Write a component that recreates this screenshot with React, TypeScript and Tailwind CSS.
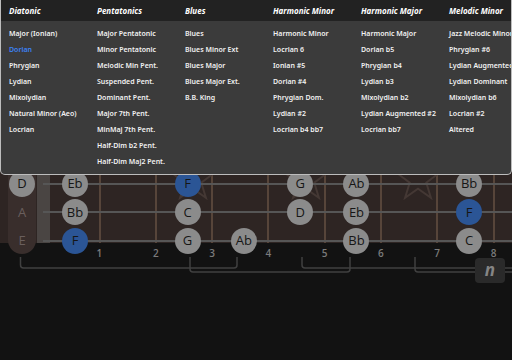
import React from 'react'

type Cell = { n: string; root?: boolean } | null

const SCALES = [
  { title: 'Diatonic', items: ['Major (Ionian)', 'Dorian', 'Phrygian', 'Lydian', 'Mixolydian', 'Natural Minor (Aeo)', 'Locrian'] },
  {
    title: 'Pentatonics',
    items: ['Major Pentatonic', 'Minor Pentatonic', 'Melodic Min Pent.', 'Suspended Pent.', 'Dominant Pent.', 'Major 7th Pent.', 'MinMaj 7th Pent.', 'Half-Dim b2 Pent.', 'Half-Dim Maj2 Pent.'],
  },
  { title: 'Blues', items: ['Blues', 'Blues Minor Ext', 'Blues Major', 'Blues Major Ext.', 'B.B. King'] },
  { title: 'Harmonic Minor', items: ['Harmonic Minor', 'Locrian 6', 'Ionian #5', 'Dorian #4', 'Phrygian Dom.', 'Lydian #2', 'Locrian b4 bb7'] },
  { title: 'Harmonic Major', items: ['Harmonic Major', 'Dorian b5', 'Phrygian b4', 'Lydian b3', 'Mixolydian b2', 'Lydian Augmented #2', 'Locrian bb7'] },
  { title: 'Melodic Minor', items: ['Jazz Melodic Minor', 'Phrygian #6', 'Lydian Augmented', 'Lydian Dominant', 'Mixolydian b6', 'Locrian #2', 'Altered'] },
]

// F dorian, frets 1..8 per string (G D A E)
const n = (x: string): Cell => ({ n: x })
const r = (x: string): Cell => ({ n: x, root: true })
const STRINGS: { open: string; on: boolean; frets: Cell[] }[] = [
  { open: 'G', on: true, frets: [n('Ab'), null, n('Bb'), null, n('C'), null, n('D'), n('Eb')] },
  { open: 'D', on: true, frets: [n('Eb'), null, r('F'), null, n('G'), n('Ab'), null, n('Bb')] },
  { open: 'A', on: false, frets: [n('Bb'), null, n('C'), null, n('D'), n('Eb'), null, r('F')] },
  { open: 'E', on: false, frets: [r('F'), null, n('G'), n('Ab'), null, n('Bb'), null, n('C')] },
]

const FRETS = [1, 2, 3, 4, 5, 6, 7, 8]

function Star() {
  return (
    <svg className="-mr-[5px] shrink-0" width="46" height="46" viewBox="-23 -23 46 46">
      <polygon
        points="0,-22 5.2,-7.1 20.9,-6.8 8.3,2.7 12.9,17.8 0,8.8 -12.9,17.8 -8.3,2.7 -20.9,-6.8 -5.2,-7.1"
        fill="none"
        stroke="#443834"
        strokeWidth="2"
      />
    </svg>
  )
}

function Dot({ cell }: { cell: { n: string; root?: boolean } }) {
  return (
    <div
      className={
        'w-[26px] h-[26px] shrink-0 rounded-full flex items-center justify-center text-[13px] text-[#161616] ' +
        (cell.root ? 'bg-[#2b5595]' : 'bg-[#8b8b8b]')
      }
    >
      {cell.n}
    </div>
  )
}

function Fretboard() {
  return (
    <div className="relative h-[243px] bg-[#2e2523]">
      {/* wood layer: open column, nut, fret wires, inlays */}
      <div className="absolute inset-0 flex items-start">
        <div className="w-[8px] shrink-0" />
        <div className="w-[28px] h-[254px] shrink-0 rounded-b-full bg-[#392e2c]" />
        <div className="w-[1px] shrink-0" />
        <div className="w-[13px] h-full shrink-0 bg-[#4a4543]" />
        <div className="w-[50.5px] h-full shrink-0 border-r-2 border-[#57453a]" />
        {[2, 3, 4, 5, 6, 7, 8, 9].map((f) => (
          <div key={f} className="w-[56.3px] h-full shrink-0 border-r-2 border-[#57453a] flex justify-end pt-[157px]">
            {(f === 3 || f === 5 || f === 7) && <Star />}
          </div>
        ))}
      </div>
      {/* strings with notes */}
      <div className="absolute inset-0 flex flex-col pt-[141px]">
        {STRINGS.map((s) => (
          <div key={s.open} className="relative h-[28.5px] shrink-0 flex items-center">
            <div className="absolute left-[43px] right-0 top-1/2 -translate-y-1/2 h-[2px] bg-[#565656]" />
            <div className="relative w-[43.2px] shrink-0 pl-[9px]">
              {s.on ? (
                <Dot cell={{ n: s.open }} />
              ) : (
                <div className="w-[26px] h-[26px] flex items-center justify-center text-[13px] text-[#6a5f5d]">{s.open}</div>
              )}
            </div>
            {s.frets.map((c, i) => (
              <div key={i} className="relative w-[56.3px] shrink-0 flex justify-end pr-[11.5px]">
                {c && <Dot cell={c} />}
              </div>
            ))}
          </div>
        ))}
      </div>
    </div>
  )
}

function ScaleMenu() {
  return (
    <div className="absolute left-0 top-0 w-[512px] h-[175px] overflow-hidden rounded-b-[5px] border border-t-0 border-[#bdbdbd] bg-[#3b3b3b] font-['Noto_Sans',sans-serif]">
      <div className="flex h-[21px] bg-[#222222]">
        {SCALES.map((c) => (
          <div key={c.title} className="w-[88px] shrink-0 pl-[8px] flex items-center text-[8px] font-bold italic text-white">
            {c.title}
          </div>
        ))}
      </div>
      <div className="flex pt-[5px]">
        {SCALES.map((c) => (
          <div key={c.title} className="w-[88px] shrink-0 pl-[8px] flex flex-col">
            {c.items.map((it) => (
              <div
                key={it}
                className={'h-[16px] flex items-center whitespace-nowrap text-[7px] font-semibold ' + (it === 'Dorian' ? 'text-[#3b82f6]' : 'text-[#f2f2f2]')}
              >
                {it}
              </div>
            ))}
          </div>
        ))}
      </div>
    </div>
  )
}

export default function App() {
  return (
    <div className="relative w-[512px] h-[360px] overflow-hidden bg-[#121212] font-['Open_Sans',sans-serif]">
      <Fretboard />
      <div className="flex pl-[71.3px] mt-[5.5px] h-[9px]">
        {FRETS.map((f) => (
          <div key={f} className="w-[56.3px] shrink-0 text-center text-[10px] leading-[9px] font-semibold text-[#7b7b7b]">
            {f}
          </div>
        ))}
      </div>
      <svg className="mt-[-0.5px] block" width="512" height="30" fill="none" stroke="#404040" strokeWidth="1.5">
        <path d="M20.5 0 V8 q0 3 3 3 H234 q3 0 3 -3 V0" />
        <path d="M190 0 V12 q0 3 3 3 H347 q3 0 3 -3 V0" />
        <path d="M302 0 V8 q0 3 3 3 H520" />
        <path d="M415 0 V12 q0 3 3 3 H520" />
      </svg>
      <div className="absolute left-[475px] top-[258px] w-[30px] h-[25px] rounded-[4px] bg-[#2a2a2a] flex items-center justify-center text-[17px] font-bold italic text-[#858585] leading-none pb-[3px]">
        n
      </div>
      <ScaleMenu />
    </div>
  )
}
